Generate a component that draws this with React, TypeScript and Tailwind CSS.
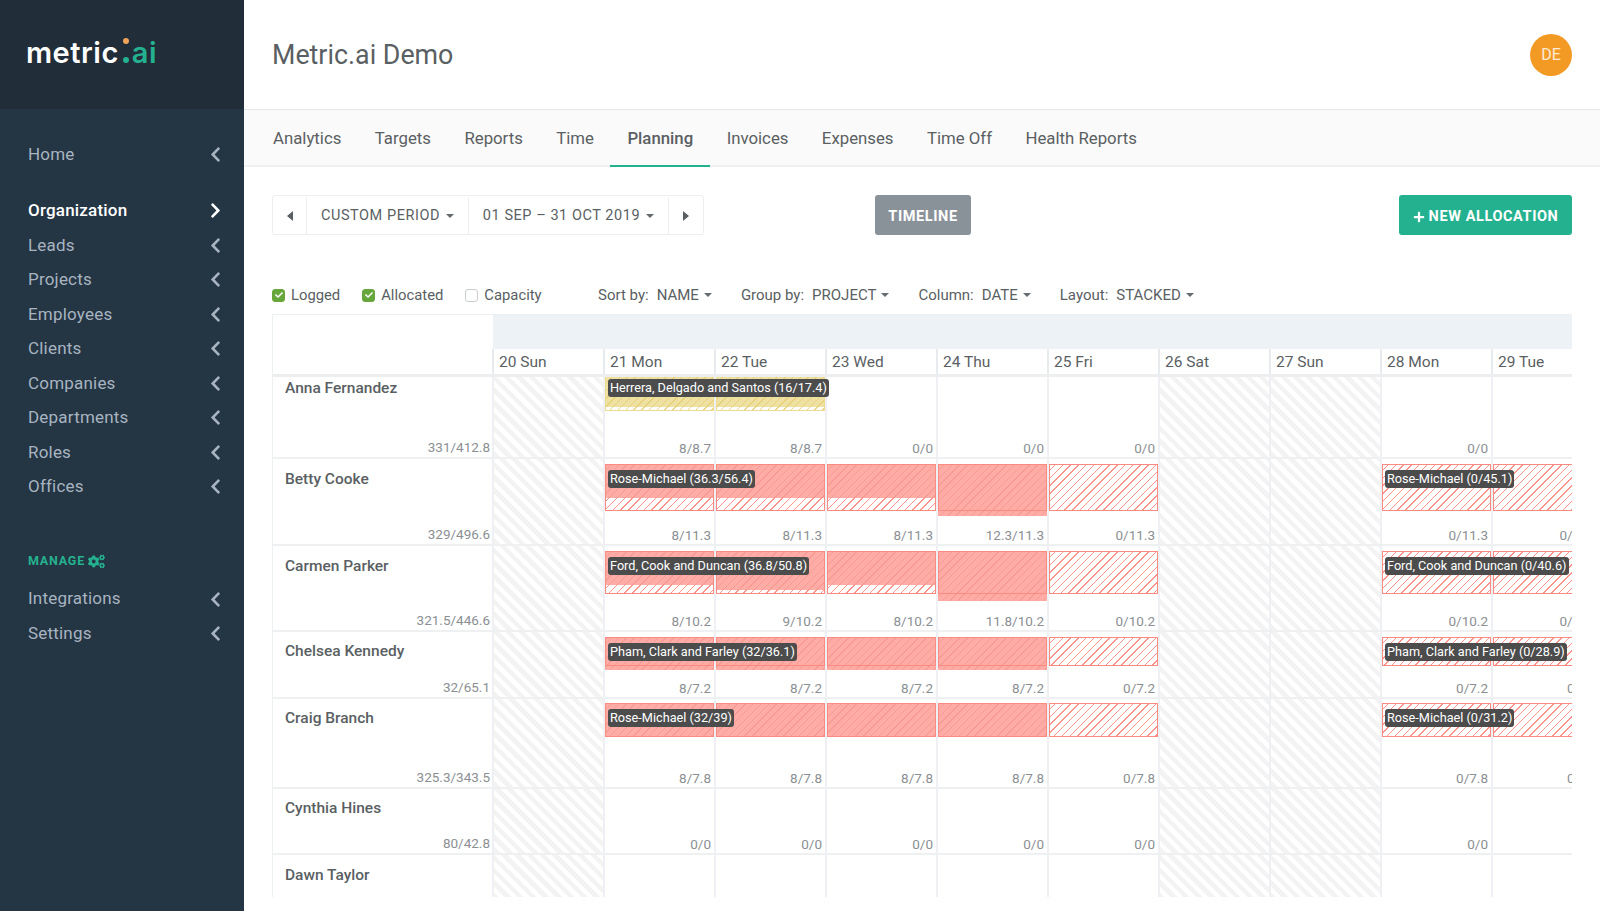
import { FaChevronLeft, FaChevronRight, FaCheck, FaPlus, FaCogs } from "react-icons/fa";

const navTop = ["Leads", "Projects", "Employees", "Clients", "Companies", "Departments", "Roles", "Offices"];
const tabs = ["Analytics", "Targets", "Reports", "Time", "Planning", "Invoices", "Expenses", "Time Off", "Health Reports"];
const days = ["20 Sun", "21 Mon", "22 Tue", "23 Wed", "24 Thu", "25 Fri", "26 Sat", "27 Sun", "28 Mon", "29 Tue"];

type Bar = { kind: "yellow" | "red"; fill: string; label?: string };
type Row = {
  name: string;
  total: string;
  height: string;
  namePad: string;
  barTop: string;
  barBox: string;
  labelTop: string;
  values: Record<number, string>;
  bars: Record<number, Bar>;
};

const weekend = [0, 6, 7];

const rows: Row[] = [
  {
    name: "Anna Fernandez",
    total: "331/412.8",
    height: "h-[82px]",
    namePad: "pt-0",
    barTop: "pt-0",
    barBox: "h-[34px]",
    labelTop: "top-[2px]",
    values: { 1: "8/8.7", 2: "8/8.7", 3: "0/0", 4: "0/0", 5: "0/0", 8: "0/0" },
    bars: {
      1: { kind: "yellow", fill: "h-[30px]", label: "Herrera, Delgado and Santos (16/17.4)" },
      2: { kind: "yellow", fill: "h-[30px]" },
    },
  },
  {
    name: "Betty Cooke",
    total: "329/496.6",
    height: "h-[87px]",
    namePad: "pt-[9px]",
    barTop: "pt-[5px]",
    barBox: "h-[47px]",
    labelTop: "top-[11px]",
    values: { 1: "8/11.3", 2: "8/11.3", 3: "8/11.3", 4: "12.3/11.3", 5: "0/11.3", 8: "0/11.3", 9: "0/11.3" },
    bars: {
      1: { kind: "red", fill: "h-[34px]", label: "Rose-Michael (36.3/56.4)" },
      2: { kind: "red", fill: "h-[34px]" },
      3: { kind: "red", fill: "h-[34px]" },
      4: { kind: "red", fill: "h-[52px]" },
      5: { kind: "red", fill: "h-0" },
      8: { kind: "red", fill: "h-0", label: "Rose-Michael (0/45.1)" },
      9: { kind: "red", fill: "h-0" },
    },
  },
  {
    name: "Carmen Parker",
    total: "321.5/446.6",
    height: "h-[86px]",
    namePad: "pt-[9px]",
    barTop: "pt-[5px]",
    barBox: "h-[43px]",
    labelTop: "top-[11px]",
    values: { 1: "8/10.2", 2: "9/10.2", 3: "8/10.2", 4: "11.8/10.2", 5: "0/10.2", 8: "0/10.2", 9: "0/10.2" },
    bars: {
      1: { kind: "red", fill: "h-[34px]", label: "Ford, Cook and Duncan (36.8/50.8)" },
      2: { kind: "red", fill: "h-[39px]" },
      3: { kind: "red", fill: "h-[34px]" },
      4: { kind: "red", fill: "h-[50px]" },
      5: { kind: "red", fill: "h-0" },
      8: { kind: "red", fill: "h-0", label: "Ford, Cook and Duncan (0/40.6)" },
      9: { kind: "red", fill: "h-0" },
    },
  },
  {
    name: "Chelsea Kennedy",
    total: "32/65.1",
    height: "h-[67px]",
    namePad: "pt-[8px]",
    barTop: "pt-[5px]",
    barBox: "h-[29px]",
    labelTop: "top-[11px]",
    values: { 1: "8/7.2", 2: "8/7.2", 3: "8/7.2", 4: "8/7.2", 5: "0/7.2", 8: "0/7.2", 9: "0/7.2" },
    bars: {
      1: { kind: "red", fill: "h-[33px]", label: "Pham, Clark and Farley (32/36.1)" },
      2: { kind: "red", fill: "h-[33px]" },
      3: { kind: "red", fill: "h-[33px]" },
      4: { kind: "red", fill: "h-[33px]" },
      5: { kind: "red", fill: "h-0" },
      8: { kind: "red", fill: "h-0", label: "Pham, Clark and Farley (0/28.9)" },
      9: { kind: "red", fill: "h-0" },
    },
  },
  {
    name: "Craig Branch",
    total: "325.3/343.5",
    height: "h-[90px]",
    namePad: "pt-[8px]",
    barTop: "pt-[4px]",
    barBox: "h-[34px]",
    labelTop: "top-[10px]",
    values: { 1: "8/7.8", 2: "8/7.8", 3: "8/7.8", 4: "8/7.8", 5: "0/7.8", 8: "0/7.8", 9: "0/7.8" },
    bars: {
      1: { kind: "red", fill: "h-[34px]", label: "Rose-Michael (32/39)" },
      2: { kind: "red", fill: "h-[34px]" },
      3: { kind: "red", fill: "h-[34px]" },
      4: { kind: "red", fill: "h-[34px]" },
      5: { kind: "red", fill: "h-0" },
      8: { kind: "red", fill: "h-0", label: "Rose-Michael (0/31.2)" },
      9: { kind: "red", fill: "h-0" },
    },
  },
  {
    name: "Cynthia Hines",
    total: "80/42.8",
    height: "h-[66px]",
    namePad: "pt-[8px]",
    barTop: "pt-0",
    barBox: "h-0",
    labelTop: "top-0",
    values: { 1: "0/0", 2: "0/0", 3: "0/0", 4: "0/0", 5: "0/0", 8: "0/0" },
    bars: {},
  },
  {
    name: "Dawn Taylor",
    total: "",
    height: "h-[44px]",
    namePad: "pt-[9px]",
    barTop: "pt-0",
    barBox: "h-0",
    labelTop: "top-0",
    values: {},
    bars: {},
  },
];

function Caret({ dir = "down" }: { dir?: "down" | "left" | "right" }) {
  if (dir === "left") {
    return (
      <svg width="6" height="10" viewBox="0 0 6 10" className="fill-[#5a5f63]">
        <path d="M6 0v10L0 5z" />
      </svg>
    );
  }
  if (dir === "right") {
    return (
      <svg width="6" height="10" viewBox="0 0 6 10" className="fill-[#5a5f63]">
        <path d="M0 0v10l6-5z" />
      </svg>
    );
  }
  return (
    <svg width="8" height="4" viewBox="0 0 8 4" className="fill-[#666b6f]">
      <path d="M0 0h8L4 4z" />
    </svg>
  );
}

function NavItem({ label, active, className = "" }: { label: string; active?: boolean; className?: string }) {
  return (
    <div className={`flex h-[34.5px] items-center justify-between pl-[28px] pr-[20px] text-[17px] tracking-[0.2px] ${active ? "font-medium text-white" : "text-[#a8b4c0]"} ${className}`}>
      <span>{label}</span>
      {active ? <FaChevronRight size={17} className="text-white" /> : <FaChevronLeft size={17} className="text-[#a8b4c0]" />}
    </div>
  );
}

function Sidebar() {
  return (
    <aside className="flex w-[244px] shrink-0 flex-col bg-[#243544]">
      <div className="h-[109px] bg-[#222d3a] pl-[26px] pt-[31px]">
        <div className="text-[29px] font-semibold leading-[44px] tracking-[0.5px] text-white font-['Inter',sans-serif]">
          metric
          <span className="relative inline-block h-[25px] w-[13px] align-baseline">
            <span className="absolute left-[4px] top-0 size-[6px] rounded-full bg-[#f0a35a]" />
            <span className="absolute bottom-0 left-[4px] size-[6px] rounded-full bg-[#24b18f]" />
          </span>
          <span className="text-[#24b18f]">ai</span>
        </div>
      </div>
      <div className="pt-[28px]">
        <NavItem label="Home" />
        <NavItem label="Organization" active className="mt-[22px]" />
        {navTop.map((item) => (
          <NavItem key={item} label={item} />
        ))}
        <div className="mt-[48px] flex items-center gap-[3px] pl-[28px] text-[12.5px] font-bold tracking-[0.8px] text-[#24b18f]">
          MANAGE
          <FaCogs size={17} />
        </div>
        <NavItem label="Integrations" className="mt-[11px]" />
        <NavItem label="Settings" />
      </div>
    </aside>
  );
}

function Checkbox({ label, on }: { label: string; on?: boolean }) {
  return (
    <label className="flex items-center gap-[6px]">
      <span className={`flex size-[13px] items-center justify-center rounded-[3px] border ${on ? "border-[#66a63a] bg-[#66a63a]" : "border-[#c9cdd1] bg-white"}`}>
        {on && <FaCheck size={8} className="text-white" />}
      </span>
      {label}
    </label>
  );
}

function Dropdown({ label, value }: { label: string; value: string }) {
  return (
    <div className="flex items-center">
      <span>{label}:</span>
      <span className="ml-[8px]">{value}</span>
      <span className="ml-[5px]">
        <Caret />
      </span>
    </div>
  );
}

function DayBar({ bar, boxHeight }: { bar: Bar; boxHeight: string }) {
  if (bar.kind === "yellow") {
    return (
      <div className={`${boxHeight} relative bg-[repeating-linear-gradient(135deg,#fff_0,#fff_4.5px,#e8d685_4.5px,#e8d685_5.5px)]`}>
        <div className={`${bar.fill} bg-[repeating-linear-gradient(135deg,#efe1a2_0,#efe1a2_4.5px,#e6d27c_4.5px,#e6d27c_5.5px)]`} />
        <div className="absolute inset-0 border-x border-b border-[#eddb8e]" />
      </div>
    );
  }
  return (
    <div className={`${boxHeight} relative bg-[repeating-linear-gradient(135deg,#fff_0,#fff_4.5px,#fb948b_4.5px,#fb948b_5.5px)]`}>
      <div className={`${bar.fill} relative bg-[repeating-linear-gradient(135deg,#feaca5_0,#feaca5_4.5px,#f79c94_4.5px,#f79c94_5.5px)]`} />
      <div className="absolute inset-0 border border-[#fb8a80]" />
    </div>
  );
}

function PlanningGrid() {
  return (
    <div className="mt-[8px] h-[583px] overflow-hidden border-l border-t border-[#edf0f2] text-[#5a5f63]">
      <div className="flex">
        <div className="h-[62px] w-[219px] shrink-0 border-b-[3px] border-[#eceef0]" />
        <div className="flex-1">
          <div className="ml-[1px] h-[34px] bg-[#ecf2f6]" />
          <div className="flex h-[28px] border-b-[3px] border-[#eceef0]">
            {days.map((day) => (
              <div key={day} className="w-[111px] shrink-0 border-l-2 border-[#e8ebee] pl-[5px] text-[15.5px] leading-[26px]">
                {day}
              </div>
            ))}
          </div>
        </div>
      </div>
      {rows.map((row) => (
        <div key={row.name} className={`flex ${row.height} border-b-2 border-[#eef0f2] last:border-b-0`}>
          <div className={`relative w-[219px] shrink-0 pl-[12px] text-[15.5px] font-medium leading-[22px] ${row.namePad}`}>
            {row.name}
            <span className="absolute -bottom-[1px] right-[2px] text-[13.5px] font-normal text-[#8b8f93]">{row.total}</span>
          </div>
          {days.map((day, i) => {
            const bar = row.bars[i];
            const isWeekend = weekend.includes(i);
            return (
              <div
                key={day}
                className={`relative w-[111px] shrink-0 border-l-2 border-[#eef0f3] ${row.barTop} ${isWeekend ? "bg-[repeating-linear-gradient(45deg,#f3f3f3_0,#f3f3f3_4.5px,#fff_4.5px,#fff_9px)]" : ""}`}
              >
                {bar && <DayBar bar={bar} boxHeight={row.barBox} />}
                {bar?.label && (
                  <span className={`absolute left-[3px] z-10 whitespace-nowrap rounded-[3px] bg-[#4c4c4c] px-[2px] text-[12.7px] leading-[18px] text-white ${row.labelTop}`}>
                    {bar.label}
                  </span>
                )}
                {row.values[i] && (
                  <span className="absolute -bottom-[1px] right-[3px] text-[13.5px] text-[#8b8f93]">{row.values[i]}</span>
                )}
              </div>
            );
          })}
        </div>
      ))}
    </div>
  );
}

export default function App() {
  return (
    <div className="flex h-[911px] w-[1600px] overflow-hidden bg-white font-['Roboto',sans-serif]">
      <Sidebar />
      <main className="min-w-0 flex-1">
        <header className="flex h-[110px] items-center justify-between border-b border-[#e3e5e7] pl-[28px] pr-[28px]">
          <h1 className="pt-[2px] text-[26.8px] leading-none text-[#5a5f63]">Metric.ai Demo</h1>
          <div className="flex size-[42px] items-center justify-center rounded-full bg-[#f39a25] text-[16px] text-white/80">DE</div>
        </header>
        <nav className="flex h-[57px] gap-[33.4px] border-b-2 border-[#eef0f1] bg-[#fafafa] pl-[29px] text-[#5a5f63]">
          {tabs.map((tab) => (
            <div key={tab} className={`relative flex items-center pt-[3px] text-[16.8px] ${tab === "Planning" ? "font-medium" : ""}`}>
              {tab}
              {tab === "Planning" && <span className="absolute -inset-x-[17px] -bottom-[2px] h-[2px] bg-[#24b18f]" />}
            </div>
          ))}
        </nav>
        <div className="pl-[28px] pr-[28px] pt-[28px]">
          <div className="flex items-center">
            <div className="flex h-[40px] items-stretch rounded-[3px] border border-[#eceef0] pt-[1px] text-[14.5px] tracking-[0.55px] text-[#5a5f63]">
              <button className="flex w-[34px] items-center justify-center border-r border-[#eceef0]"><Caret dir="left" /></button>
              <div className="flex w-[162px] items-center justify-center gap-[6px] border-r border-[#eceef0]">CUSTOM PERIOD <Caret /></div>
              <div className="flex w-[200px] items-center justify-center gap-[6px] border-r border-[#eceef0]">01 SEP – 31 OCT 2019 <Caret /></div>
              <button className="flex w-[34px] items-center justify-center"><Caret dir="right" /></button>
            </div>
            <button className="ml-[171px] flex h-[40px] w-[96px] items-center justify-center rounded-[3px] bg-[#8a9299] pt-[3px] text-[14.5px] font-bold tracking-[0.6px] text-white">TIMELINE</button>
            <button className="ml-auto flex h-[40px] w-[173px] items-center justify-center gap-[4px] rounded-[3px] bg-[#24b18f] pt-[3px] text-[14.5px] font-bold tracking-[0.6px] text-white">
              <FaPlus size={12} />
              NEW ALLOCATION
            </button>
          </div>
          <div className="mt-[49px] flex h-[22px] items-center text-[15px] text-[#5a5f63]">
            <div className="flex w-[326px] gap-[22px] text-[14.8px]">
              <Checkbox label="Logged" on />
              <Checkbox label="Allocated" on />
              <Checkbox label="Capacity" />
            </div>
            <div className="flex gap-[29px]">
              <Dropdown label="Sort by" value="NAME" />
              <Dropdown label="Group by" value="PROJECT" />
              <Dropdown label="Column" value="DATE" />
              <Dropdown label="Layout" value="STACKED" />
            </div>
          </div>
          <PlanningGrid />
        </div>
      </main>
    </div>
  );
}
